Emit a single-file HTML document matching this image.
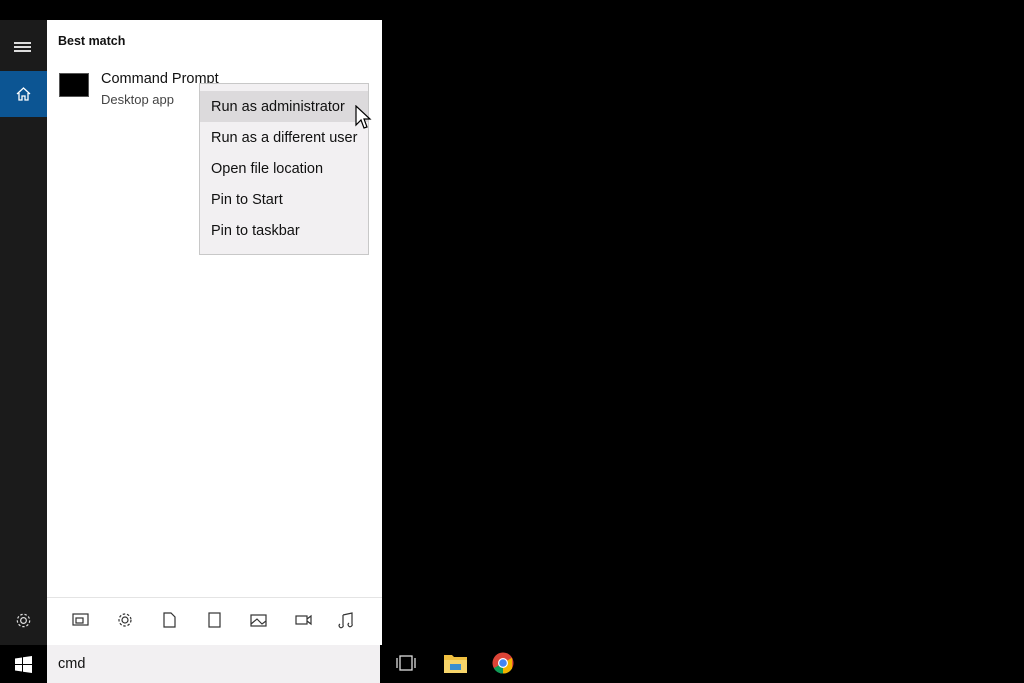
<!DOCTYPE html><html><head><style>
*{margin:0;padding:0;box-sizing:border-box}
body{width:1024px;height:683px;background:#000;position:relative;overflow:hidden;font-family:"Liberation Sans",sans-serif}
.a{position:absolute}
.mi{position:absolute;left:11px;font-size:14.5px;color:#111}
</style></head><body>
<div class="a" style="left:0;top:20px;width:47px;height:625px;background:#1b1b1b"></div>
<div class="a" style="left:14px;top:42px;width:17px;height:1.5px;background:#ddd;box-shadow:0 4px 0 #ddd,0 8px 0 #ddd"></div>
<div class="a" style="left:0;top:71px;width:47px;height:46px;background:#0c5593"></div>
<svg class="a" style="left:15px;top:86px" width="17" height="16" viewBox="0 0 17 16"><path d="M2 8 L8.5 2 L15 8 M4 7 V14 H7 V10 H10 V14 H13 V7" fill="none" stroke="#fff" stroke-width="1.3"/></svg>
<svg class="a" style="left:14px;top:611px" width="19" height="19" viewBox="0 0 20 20"><circle cx="10" cy="10" r="3" fill="none" stroke="#ddd" stroke-width="1.3"/><circle cx="10" cy="10" r="6.5" fill="none" stroke="#ddd" stroke-width="1.3" stroke-dasharray="2.5 2"/></svg>
<div class="a" style="left:47px;top:20px;width:335px;height:625px;background:#fff"></div>
<div class="a" style="left:58px;top:34px;font-size:12.5px;font-weight:bold;color:#111">Best match</div>
<div class="a" style="left:59px;top:73px;width:30px;height:24px;background:#000;border:1px solid #555"></div>
<div class="a" style="left:101px;top:71px;font-size:14.5px;color:#111">Command Prompt</div>
<div class="a" style="left:101px;top:92px;font-size:13px;color:#444">Desktop app</div>
<div class="a" style="left:199px;top:83px;width:170px;height:172px;background:#f2f0f2;border:1px solid #c8c8c8">
<div class="a" style="left:0;top:7px;width:168px;height:31px;background:#dcdadc"></div>
<div class="mi" style="top:15px">Run as administrator</div>
<div class="mi" style="top:46px">Run as a different user</div>
<div class="mi" style="top:77px">Open file location</div>
<div class="mi" style="top:108px">Pin to Start</div>
<div class="mi" style="top:139px">Pin to taskbar</div>
</div>
<svg class="a" style="left:355px;top:105px" width="20" height="28" viewBox="0 0 20 28"><path d="M1 1 V20 L6 15 L9 23 L12 22 L9 14 H15 Z" fill="#fff" stroke="#000" stroke-width="1.2"/></svg>
<div class="a" style="left:47px;top:597px;width:335px;height:1px;background:#e4e4e4"></div>
<svg class="a" style="left:47px;top:605px" width="335" height="30" viewBox="0 0 335 30" fill="none" stroke="#333" stroke-width="1.2">
<rect x="26" y="9" width="15" height="11"/><rect x="29" y="13" width="7" height="5"/>
<circle cx="78" cy="15" r="3"/><circle cx="78" cy="15" r="6" stroke-dasharray="2.5 1.8"/>
<path d="M117 8 H124 L128 12 V22 H117 Z"/>
<rect x="162" y="8" width="11" height="14"/>
<rect x="204" y="10" width="15" height="11"/><path d="M204 19 L210 14 L215 19 L219 16"/>
<rect x="249" y="11" width="11" height="8"/><path d="M260 14 L264 11 V19 L260 16"/>
<path d="M296 10 V20 M296 10 L305 8 V19 M296 20 a2 2 0 1 1 -3 -1 M305 19 a2 2 0 1 1 -3 -1"/>
</svg>
<div class="a" style="left:47px;top:645px;width:333px;height:38px;background:#f2f0f2"></div>
<div class="a" style="left:58px;top:656px;font-size:14.5px;color:#111">cmd</div>
<svg class="a" style="left:15px;top:656px" width="17" height="17" viewBox="0 0 17 17" fill="#fff"><path d="M0 2.5 L7 1.5 V8 H0Z M8 1.3 L17 0 V8 H8Z M0 9 H7 V15.5 L0 14.5Z M8 9 H17 V17 L8 15.7Z"/></svg>
<svg class="a" style="left:395px;top:654px" width="22" height="18" viewBox="0 0 22 18" fill="none" stroke="#ddd" stroke-width="1.3"><rect x="5" y="2" width="12" height="14"/><path d="M2 4 V14 M20 4 V14"/></svg>
<svg class="a" style="left:444px;top:654px" width="23" height="19" viewBox="0 0 23 19"><path d="M0 1 H8 L10 3 H23 V19 H0Z" fill="#f0c040"/><rect x="0" y="6" width="23" height="13" fill="#f7d56a"/><rect x="6" y="10" width="11" height="6" fill="#3b8fd0"/></svg>
<svg class="a" style="left:492px;top:652px" width="22" height="22" viewBox="0 0 22 22"><circle cx="11" cy="11" r="10.5" fill="#db4437"/><path d="M11 11 L20.1 16.2 A10.5 10.5 0 0 1 1.9 16.2Z" fill="#0f9d58"/><path d="M11 11 L11 21.5 A10.5 10.5 0 0 0 20.1 16.2 L20.1 5.8Z" fill="#f4b400"/><path d="M11 11 L1.9 16.2 A10.5 10.5 0 0 0 11 21.5Z" fill="#0f9d58"/><circle cx="11" cy="11" r="5" fill="#fff"/><circle cx="11" cy="11" r="3.8" fill="#4285f4"/></svg>
</body></html>
